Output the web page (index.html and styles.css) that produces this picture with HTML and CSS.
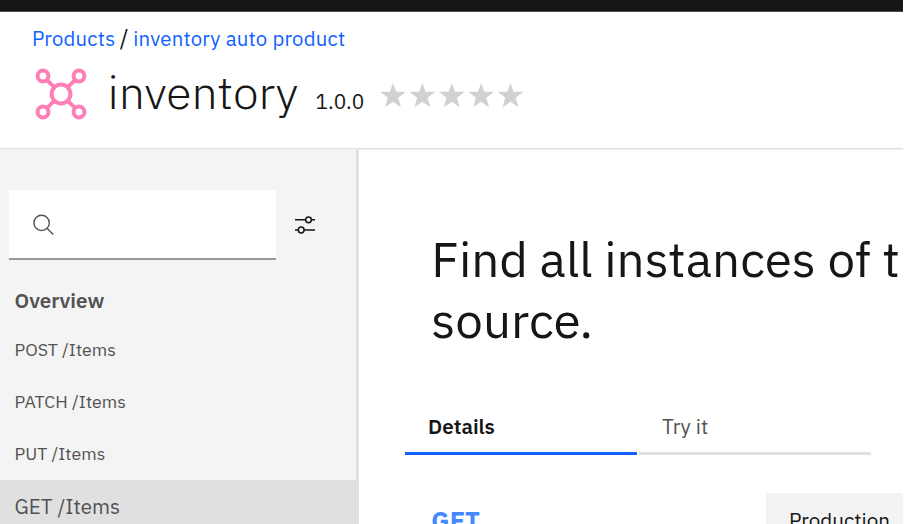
FILE: index.html
```html
<!DOCTYPE html>
<html lang="en">
<head>
<meta charset="utf-8">
<title>inventory</title>
<link rel="stylesheet" href="styles.css">
</head>
<body>
<div class="topbar"></div>
<header class="header">
  <nav class="crumbs"><a class="crumb-products">Products</a><span class="slash">/</span><a class="crumb-current">inventory auto product</a></nav>
  <div class="title-row">
    <svg class="logo" viewBox="0 0 54 54" fill="none" stroke="#ff7eb6" stroke-width="4">
      <circle cx="27" cy="27" r="9.4"/>
      <circle cx="9" cy="9" r="5.4"/><circle cx="45" cy="9" r="5.4"/>
      <circle cx="9" cy="45" r="5.4"/><circle cx="45" cy="45" r="5.4"/>
      <path d="M12.8 12.8l7.6 7.6M41.2 12.8l-7.6 7.6M12.8 41.2l7.6-7.6M41.2 41.2l-7.6-7.6"/>
    </svg>
    <h1 class="title">inventory</h1>
    <span class="version">1.0.0</span>
    <svg class="stars" viewBox="0 0 144 24" fill="#d1d1d1">
      <defs><path id="star" d="M13 0l3.1 8.7 9.8.1-7.7 6 2.7 9.4-7.9-5.4-7.9 5.4 2.7-9.4-7.7-6 9.8-.1z"/></defs>
      <use href="#star"/><use href="#star" x="29.4"/><use href="#star" x="58.8"/><use href="#star" x="88.1"/><use href="#star" x="117.5"/>
    </svg>
  </div>
</header>
<div class="body">
  <aside class="sidebar">
    <div class="search-row">
      <div class="search">
        <svg class="search-icon" viewBox="0 0 22 22" fill="none" stroke="#525252" stroke-width="1.4"><circle cx="8.6" cy="8.9" r="7.7"/><path d="M14 14.3l6.2 6.2"/></svg>
      </div>
      <svg class="filter" viewBox="0 0 22 20" fill="none" stroke="#161616" stroke-width="1.5"><path d="M1 4.8h10.6M17.4 4.8H21M1 15h3.3M10.1 15H21"/><circle cx="14.5" cy="4.8" r="2.9"/><circle cx="7.2" cy="15" r="2.9"/></svg>
    </div>
    <div class="overview"><span>Overview</span></div>
    <ul class="items">
      <li class="item">POST /Items</li>
      <li class="item">PATCH /Items</li>
      <li class="item">PUT /Items</li>
      <li class="item selected">GET /Items</li>
    </ul>
  </aside>
  <main class="main">
    <h2 class="heading">Find all instances of t<br>source.</h2>
    <div class="tabs">
      <div class="tab active">Details</div>
      <div class="tab">Try it</div>
    </div>
    <div class="endpoint">
      <span class="method">GET</span>
      <div class="select">Production</div>
    </div>
  </main>
</div>
</body>
</html>
```
FILE: styles.css
```css
* { box-sizing: border-box; }
body {
  margin: 0;
  width: 903px;
  height: 524px;
  overflow: hidden;
  display: flex;
  flex-direction: column;
  background: #fff;
  color: #161616;
  font-family: "IBM Plex Sans", "Noto Sans", sans-serif;
  font-size: 20.6px;
}
.topbar { height: 12px; flex: none; background: #161616; border-bottom: 1px solid #4b4b4b; }
.header { height: 138px; flex: none; padding-left: 32px; border-bottom: 1px solid #f0f1f3; box-shadow: inset 0 -1px #dcdee1; }
.crumbs { display: flex; height: 53px; line-height: 53px; color: #0f62fe; white-space: nowrap; font-size: 20.4px; letter-spacing: .2px; }
.slash { color: #161616; width: 18px; text-align: center; font-size: 23px; line-height: 51px; }
.title-row { display: flex; height: 56px; }
.logo { width: 54px; height: 54px; margin: 2px 0 0 2px; flex: none; }
.title { margin: -5px 0 0 19.5px; width: 208px; flex: none; font-weight: 300; font-size: 46.4px; line-height: 64px; }
.version { width: 64.5px; flex: none; font-size: 20.8px; line-height: 74px; }
.stars { width: 144px; height: 24px; margin-top: 18px; flex: none; overflow: visible; }
.body { display: flex; height: 374px; flex: none; }
.sidebar { width: 359px; flex: none; background: #f4f4f4; border-right: 3px solid #dfe1e5; padding-top: 40px; }
.search-row { display: flex; height: 70px; padding-left: 9px; }
.search { width: 267px; background: #fff; border-bottom: 2px solid #979797; padding: 24px; }
.search-icon { width: 22px; height: 22px; display: block; }
.filter { width: 22px; height: 20px; margin: 25px 0 0 18px; }
.overview { height: 64px; padding: 9px 0 0 14.5px; line-height: 64px; font-weight: 600; color: #525252; }
.items { list-style: none; margin: 0; padding: 0; }
.item { height: 52px; padding-left: 14.5px; font-size: 17.7px; line-height: 52px; color: #525252; }
.item.selected { height: 53px; background: #e0e0e0; font-size: 20.6px; line-height: 53px; }
.main { flex: 1; min-width: 0; padding: 78px 0 0 46px; }
.heading { margin: 0; padding-left: 26.3px; font-weight: 400; font-size: 49.4px; line-height: 61px; white-space: nowrap; }
.tabs { display: flex; gap: 2px; margin-top: 52px; }
.tab { width: 232px; height: 53px; padding-left: 23px; line-height: 49px; border-bottom: 3px solid #e0e0e0; color: #525252; }
.tab.active { font-weight: 600; color: #161616; border-color: #0f62fe; }
.endpoint { display: flex; justify-content: space-between; margin-top: 38px; padding-left: 26.3px; }
.method { font-size: 25.5px; line-height: 56px; font-weight: 700; color: #4589ff; }
.select { width: 137px; height: 56px; padding-left: 23px; background: #f3f3f3; font-size: 20.6px; line-height: 56px; }
```
